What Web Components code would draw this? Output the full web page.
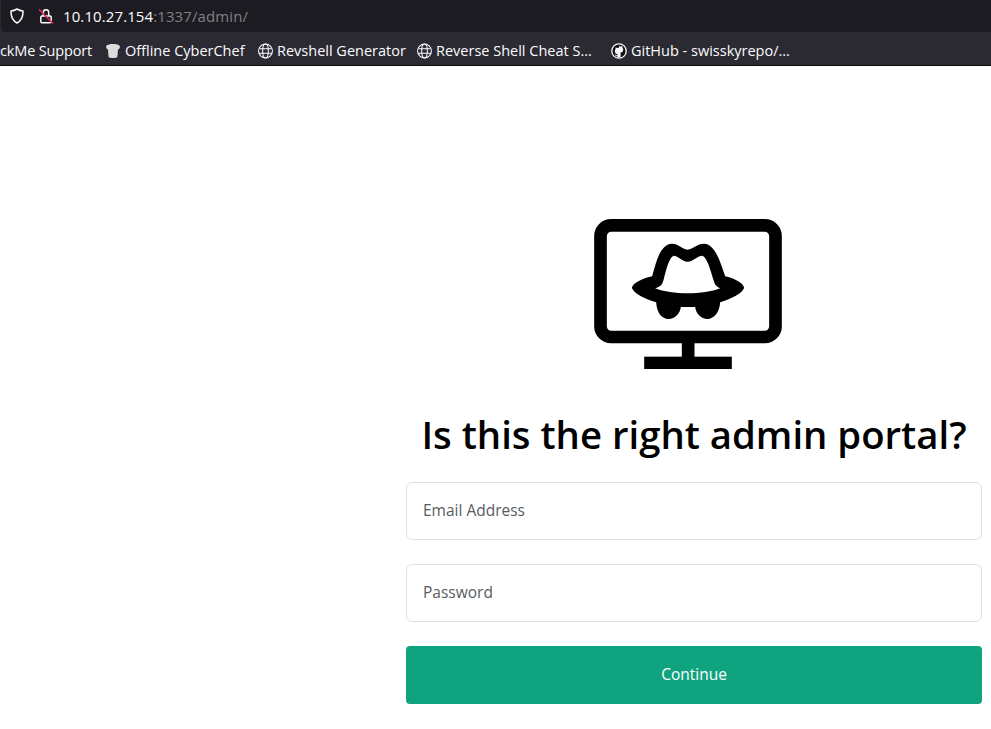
<!DOCTYPE html>
<html>
<head>
<meta charset="utf-8">
<title>Admin portal</title>
<style>
  html, body { margin: 0; padding: 0; background: #fff; }
  body { height: 729px; overflow: hidden; font-family: "Open Sans", "Noto Sans", sans-serif; }
</style>
</head>
<body>
<browser-chrome url-host="10.10.27.154" url-rest=":1337/admin/"></browser-chrome>
<login-page></login-page>

<template id="browser-chrome-tpl">
  <style>
    :host { display: block; background: #2b2a33; color: #fbfbfe; }
    .urlbar {
      height: 32px;
      box-sizing: border-box;
      margin-left: 1px;
      padding-left: 9px;
      background: #1c1b22;
      border-bottom-left-radius: 4px;
      display: flex;
      align-items: center;
    }
    .shield { width: 14px; height: 16px; display: block; }
    .lock { width: 16px; height: 16px; display: block; margin-left: 14px; }
    .url { margin-left: 9px; font-size: 15px; letter-spacing: 0.1px; white-space: nowrap; }
    .url span { color: #808085; }
    .bookmarks {
      height: 34px;
      box-sizing: border-box;
      padding-top: 4px;
      display: flex;
      align-items: center;
      border-bottom: 1px solid #0c0c0d;
      overflow: hidden;
    }
  </style>
  <div class="urlbar">
    <svg class="shield" viewBox="0 0 14 16" fill="none" stroke="#fbfbfe" stroke-width="1.5">
      <path d="M7 1 C9 2.2 11 2.8 13 3 C13.2 8.5 11.5 12.700 7 15 C2.5 12.700 .8 8.5 1 3 C3 2.8 5 2.2 7 1Z" stroke-linejoin="round"/>
    </svg>
    <svg class="lock" viewBox="0 0 16 16" fill="none">
      <path d="M5.300 8V4.500a2.700 2.700 0 0 1 5.400 0V8" stroke="#fbfbfe" stroke-width="1.500"/>
      <rect x="2.800" y="8" width="10.400" height="6.800" rx="1.200" stroke="#fbfbfe" stroke-width="1.500"/>
      <path d="M1 1.200 15 15.500" stroke="#e22850" stroke-width="1.600"/>
    </svg>
    <div class="url"><slot name="host"></slot><span id="rest"></span></div>
  </div>
  <div class="bookmarks"><slot></slot></div>
</template>

<template id="book-mark-tpl">
  <style>
    :host { display: flex; align-items: center; flex: none; white-space: nowrap; font-size: 14.5px; color: #fbfbfe; }
    .icon { margin-right: 4px; flex: none; display: flex; }
    :host([no-icon]) .icon { display: none; }
  </style>
  <span class="icon"><slot name="icon"></slot></span>
  <span class="label"><slot></slot></span>
</template>

<template id="login-page-tpl">
  <style>
    :host {
      display: flex;
      flex-direction: column;
      box-sizing: border-box;
      padding: 153px 9px 0 406px;
    }
    .logo { display: block; align-self: center; width: 188px; height: 150px; margin-right: 12px; }
    h1 {
      margin: 39px 0 0;
      height: 74px;
      line-height: 52px;
      font-size: 38.3px;
      font-weight: 600;
      color: #000;
      text-align: center;
      white-space: nowrap;
    }
    .stack { display: flex; flex-direction: column; gap: 24px; }
  </style>
  <svg class="logo" viewBox="42 42 563 450">
    <rect x="61" y="61" width="525" height="335" rx="32" fill="#fff" stroke="#000" stroke-width="38"/>
    <rect x="305" y="410" width="38" height="50" fill="#000"/>
    <rect x="192" y="455" width="263" height="37" fill="#000"/>
    <path fill="#000" d="M155 248C160 232 190 220 216 214C228 170 240 118 275 116C295 116 305 132 322 134C340 132 350 116 372 116C405 118 420 170 435 214C460 220 488 232 492 248C488 265 450 282 420 292C418 325 400 342 382 342C362 342 347 325 345 306L302 306C300 325 285 342 265 342C245 342 230 325 228 292C195 282 160 265 155 248Z"/>
    <path fill="#fff" d="M225 250C240 245 246 240 250 225C258 195 266 158 280 152C295 152 305 170 322 170C340 170 350 152 367 152C382 158 392 200 400 225C404 240 410 245 420 250C370 270 275 270 225 250Z"/>
  </svg>
  <h1><slot name="title"></slot></h1>
  <div class="stack"><slot></slot></div>
</template>

<template id="text-field-tpl">
  <style>
    :host {
      display: flex;
      align-items: center;
      height: 58px;
      box-sizing: border-box;
      padding: 0 16px 2px;
      background: #fff;
      border: 1px solid #dee2e6;
      border-radius: 6px;
      font-size: 15.5px;
      color: #595c5f;
    }
  </style>
  <slot></slot>
</template>

<template id="primary-button-tpl">
  <style>
    :host {
      display: flex;
      align-items: center;
      justify-content: center;
      height: 58px;
      padding-bottom: 2px;
      box-sizing: border-box;
      background: #10a37f;
      border-radius: 4px;
      font-size: 15.5px;
      color: #fff;
    }
  </style>
  <slot></slot>
</template>

<script>
function makeEl(name, setup) {
  customElements.define(name, class extends HTMLElement {
    connectedCallback() {
      if (this.shadowRoot) return;
      this.attachShadow({ mode: 'open' });
      this.shadowRoot.appendChild(document.getElementById(name + '-tpl').content.cloneNode(true));
      if (setup) setup(this);
    }
  });
}

const globe = `<svg slot="icon" width="15" height="16" viewBox="0 0 16 17" fill="none" stroke="#fbfbfe" stroke-width="1.1">
  <circle cx="8" cy="8.500" r="7.400"/><ellipse cx="8" cy="8.500" rx="3" ry="7.400"/><path d="M1.300 6h13.400M1.300 11h13.400"/></svg>`;
const chef = `<svg slot="icon" width="16" height="16" viewBox="0 0 16 16" fill="#dcdcdc">
  <path d="M3.500 1.800C5 .6 6.500 1.300 8 1c1.600.3 3-.4 4.500.8 1.800-.1 3 1.700 2.200 3.300-.4.900-1 1.300-1.700 1.600L12.400 14c-1.400 1.300-7.400 1.300-8.800 0L3 6.700C2.300 6.400 1.700 6 1.300 5.100.5 3.500 1.700 1.700 3.500 1.800Z"/></svg>`;
const github = `<svg slot="icon" width="16" height="16" viewBox="0 0 16 16">
  <circle cx="8" cy="8" r="7.200" fill="#111114" stroke="#fbfbfe" stroke-width="1.300"/>
  <path fill="#fbfbfe" d="M8 3.300c.8 0 1.300.1 1.800.3.500-.4 1.200-.7 1.500-.6.300.7.200 1.300.1 1.600.5.600.8 1.200.8 2 0 2.300-1.400 3-3.100 3.200.4.300.5.700.5 1.200v3.400H6.400v-1.100c-1.400.3-2-.4-2.300-1.200-.2-.4-.5-.7-.8-.9.400-.2 1 .1 1.300.6.400.6.900.7 1.800.4 0-.4.200-.7.400-.9-1.700-.2-3-.9-3-3.200 0-.8.300-1.400.8-2-.1-.3-.2-.9.100-1.600.3-.1 1 .2 1.500.6.500-.2 1-.3 1.800-.3Z"/></svg>`;

makeEl('browser-chrome', host => {
  const name = document.createElement('span');
  name.slot = 'host';
  name.textContent = host.getAttribute('url-host');
  host.appendChild(name);
  host.shadowRoot.getElementById('rest').textContent = host.getAttribute('url-rest');
  [
    ['ckMe Support', '', 0, 92],
    ['Offline CyberChef', chef, 13, 140],
    ['Revshell Generator', globe, 13, 146],
    ['Reverse Shell Cheat S…', globe, 13, 178],
    ['GitHub - swisskyrepo/…', github, 16, 179]
  ].forEach(([text, icon, gap, width]) => {
    const b = document.createElement('book-mark');
    if (!icon) { b.setAttribute('no-icon', ''); b.style.letterSpacing = '-0.15px'; }
    b.style.marginLeft = gap + 'px';
    b.style.width = width + 'px';
    b.innerHTML = icon + text;
    host.appendChild(b);
  });
});
makeEl('book-mark');
makeEl('login-page');
makeEl('text-field');
makeEl('primary-button');

document.querySelector('login-page').innerHTML = `
  <span slot="title">Is this the right admin portal?</span>
  <text-field>Email Address</text-field>
  <text-field>Password</text-field>
  <primary-button>Continue</primary-button>`;
</script>
</body>
</html>
